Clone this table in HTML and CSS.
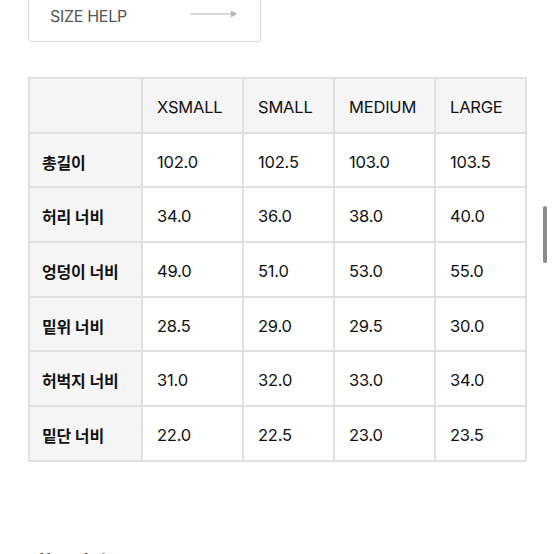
FILE: index.html
```html
<!DOCTYPE html>
<html lang="ko">
<head>
<meta charset="utf-8">
<link rel="stylesheet" href="styles.css">
</head>
<body>
<div class="page">
  <a class="size-help">
    <span class="label">SIZE HELP</span>
    <svg class="arrow" width="48" height="10" viewBox="0 0 48 10"><path d="M0 5H46" stroke="#b5b5b5" stroke-width="1.2" fill="none"/><path d="M41 1.5L47 5L41 8.5Z" fill="#b5b5b5"/></svg>
  </a>
  <table class="size-table">
    <colgroup>
      <col class="c1"><col class="c2"><col class="c3"><col class="c4"><col class="c5">
    </colgroup>
    <tr class="head"><th></th><th>XSMALL</th><th>SMALL</th><th>MEDIUM</th><th>LARGE</th></tr>
    <tr><th>총길이</th><td>102.0</td><td>102.5</td><td>103.0</td><td>103.5</td></tr>
    <tr><th>허리 너비</th><td>34.0</td><td>36.0</td><td>38.0</td><td>40.0</td></tr>
    <tr><th>엉덩이 너비</th><td>49.0</td><td>51.0</td><td>53.0</td><td>55.0</td></tr>
    <tr><th>밑위 너비</th><td>28.5</td><td>29.0</td><td>29.5</td><td>30.0</td></tr>
    <tr><th>허벅지 너비</th><td>31.0</td><td>32.0</td><td>33.0</td><td>34.0</td></tr>
    <tr><th>밑단 너비</th><td>22.0</td><td>22.5</td><td>23.0</td><td>23.5</td></tr>
  </table>
  <h3 class="next-title">착용 사진</h3>
</div>
<div class="scrollbar"></div>
</body>
</html>
```
FILE: styles.css
```css
html, body {
  margin: 0;
  padding: 0;
  background: #fff;
  overflow: hidden;
}
body {
  font-family: "Inter", "Noto Sans CJK KR", sans-serif;
  color: #111;
}
.page {
  padding-left: 28px;
  width: 498px;
}
.size-help {
  display: flex;
  align-items: center;
  justify-content: space-between;
  box-sizing: border-box;
  width: 233px;
  height: 60px;
  margin-top: -18px;
  padding: 7px 22px 0 21px;
  border: 1px solid #dadada;
  border-radius: 3px;
  color: #555;
  font-size: 16px;
  letter-spacing: -0.3px;
}
.size-help .arrow {
  margin-top: -3px;
}
.size-table {
  margin-top: 35px;
  border-collapse: collapse;
  table-layout: fixed;
  width: 498px;
  font-size: 16.5px;
}
.c1 { width: 113px; }
.c2 { width: 101px; }
.c3 { width: 91px; }
.c4 { width: 101px; }
.c5 { width: 91px; }
.size-table th, .size-table td {
  border: 2px solid #e0e0e0;
  height: 49.7px;
  padding: 3px 0 0 14px;
  text-align: left;
  vertical-align: middle;
  font-weight: 400;
  color: #111;
  letter-spacing: -0.2px;
}
.size-table tr th:first-child {
  background: #f5f5f5;
  font-weight: 600;
  font-size: 16px;
  padding-left: 12px;
}
.size-table tr.head th {
  background: #f5f5f5;
  font-weight: 400;
}
.next-title {
  margin: 86px 0 0 8px;
  font-size: 18px;
  font-weight: 700;
}
.scrollbar {
  position: absolute;
  left: 543px;
  top: 206px;
  width: 4px;
  height: 57px;
  border-radius: 2px;
  background: #8c8c8c;
}
```
